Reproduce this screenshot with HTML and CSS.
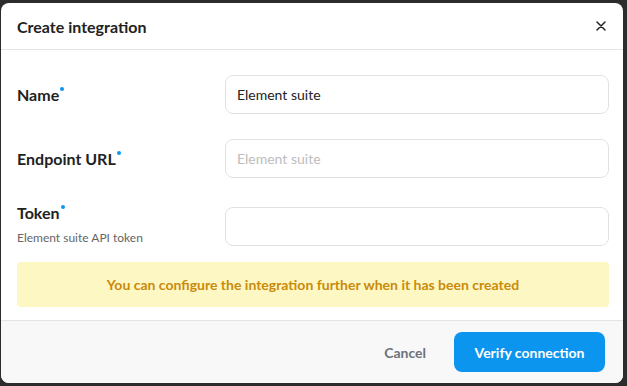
FILE: index.html
```html
<!DOCTYPE html>
<html lang="en">
<head>
  <meta charset="UTF-8" />
  <meta name="viewport" content="width=device-width, initial-scale=1" />
  <title>Create integration</title>
  <link rel="stylesheet" href="styles.css">
</head>
<body>

  <div class="modal">
    <header class="modal-header">
      <h2>Create integration</h2>
      <button class="btn-close" title="Close">
        <svg width="10" height="10" viewBox="0 0 10 10"><path d="M1 1 L9 9 M9 1 L1 9" stroke="#222" stroke-width="1.5" stroke-linecap="round"/></svg>
      </button>
    </header>

    <div class="modal-body">
      <div class="fields">
        <div class="field-label">
          <label for="name">Name<span class="req"></span></label>
        </div>
        <input id="name" type="text" value="Element suite">

        <div class="field-label">
          <label for="endpoint">Endpoint URL<span class="req"></span></label>
        </div>
        <input id="endpoint" type="text" placeholder="Element suite">

        <div class="field-label">
          <label for="token">Token<span class="req"></span></label>
          <div class="hint">Element suite API token</div>
        </div>
        <input id="token" type="text">
      </div>

      <div class="notice">You can configure the integration further when it has been created</div>
    </div>

    <footer class="modal-footer">
      <button class="btn-cancel">Cancel</button>
      <button class="btn-primary">Verify connection</button>
    </footer>
  </div>

</body>
</html>
```

FILE: styles.css
```css
* {
  box-sizing: border-box;
}
body {
  font-family: Lato, 'Noto Sans', sans-serif;
  background: #2c2c2c;
  margin: 0;
  padding: 0;
}
.modal {
  margin: 3px 0 0 1px;
  width: 622px;
  height: 380px;
  background: white;
  border-radius: 8px;
  overflow: hidden;
  display: flex;
  flex-direction: column;
}
.modal-header {
  height: 47px;
  border-bottom: 1px solid #e4e4e6;
  display: flex;
  align-items: center;
  justify-content: space-between;
  padding: 0 16px 0 16px;
}
.modal-header h2 {
  margin: 0;
  font-size: 16px;
  font-weight: 700;
  color: #222;
}
.btn-close {
  background: transparent;
  border: none;
  padding: 0;
  width: 12px;
  height: 12px;
  display: flex;
  align-items: center;
  justify-content: center;
  cursor: pointer;
}

.modal-body {
  flex: 1;
  padding: 25px 14px 0 16px;
}
.fields {
  display: grid;
  grid-template-columns: 208px 1fr;
  row-gap: 25px;
  align-items: center;
}
.field-label label {
  font-size: 16px;
  font-weight: 700;
  color: #222;
  position: relative;
}
.req {
  position: absolute;
  top: 2px;
  right: -5px;
  width: 4px;
  height: 4px;
  border-radius: 50%;
  background: #0b95ee;
}
.hint {
  margin-top: 8px;
  margin-bottom: 4px;
  font-size: 12px;
  color: #666;
}
.fields input {
  height: 39px;
  border: 1px solid #e2e2e4;
  border-radius: 8px;
  padding: 0 11px;
  font-family: inherit;
  font-size: 14px;
  color: #222;
  outline: none;
}
.fields input::placeholder {
  color: #bdbdbd;
}

.notice {
  margin-top: 13px;
  height: 45px;
  background: #fdf7c3;
  border-radius: 4px;
  display: flex;
  align-items: center;
  justify-content: center;
  font-size: 14px;
  font-weight: 700;
  color: #c98b0a;
}

.modal-footer {
  height: 63px;
  border-top: 1px solid #e4e4e6;
  background: #f8f8f9;
  display: flex;
  align-items: center;
  justify-content: flex-end;
  gap: 14px;
  padding: 0 18px;
}
.btn-cancel {
  background: transparent;
  border: none;
  font-family: inherit;
  font-size: 14px;
  font-weight: 700;
  color: #6d727a;
  padding: 8px 14px;
  cursor: pointer;
}
.btn-primary {
  height: 40px;
  width: 151px;
  background: #0b95ee;
  border: none;
  border-radius: 8px;
  color: white;
  font-family: inherit;
  font-size: 14px;
  font-weight: 700;
  cursor: pointer;
}
```
